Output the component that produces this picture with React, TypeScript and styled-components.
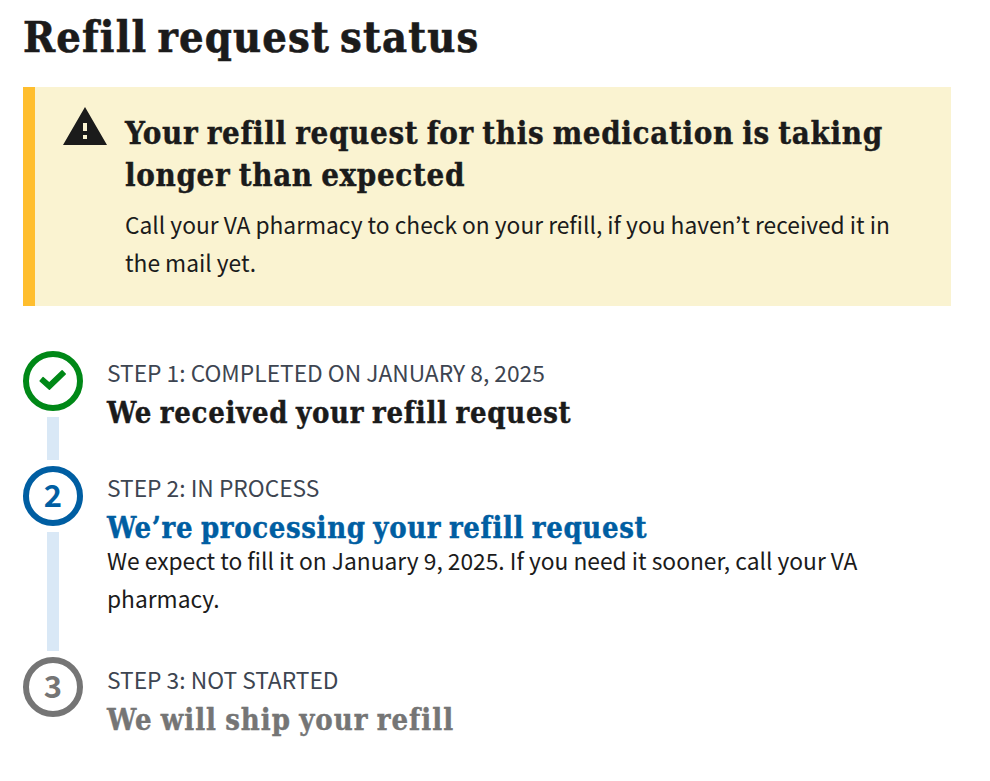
import React from "react";
import styled, { createGlobalStyle } from "styled-components";
import { MdWarning } from "react-icons/md";

const serif = `"DejaVu Serif Condensed", "DejaVu Serif", serif`;
const sans = `"Noto Sans CJK JP", "Open Sans", sans-serif`;

const GlobalStyle = createGlobalStyle`
  *, *::before, *::after { box-sizing: border-box; }
  body { margin: 0; background: #fff; color: #1b1b1b; font-family: ${sans}; }
  h1, h2, h3, p, ol { margin: 0; padding: 0; }
`;

const Page = styled.main`
  padding: 10px 39px 0 23px;
`;

const PageTitle = styled.h1`
  font: 700 43px/54px ${serif};
  letter-spacing: 1.15px;
  word-spacing: -4.5px;
  -webkit-text-stroke: 0.6px currentColor;
`;

const Alert = styled.section`
  display: flex;
  height: 219px;
  margin-top: 23px;
  padding: 16px 32px 0 26px;
  border-left: 12px solid #ffbe2e;
  background: #faf3d1;
`;

const AlertIcon = styled(MdWarning)`
  flex: none;
  width: 48px;
  height: 48px;
`;

const AlertBody = styled.div`
  flex: 1;
  padding: 9px 0 0 16px;
`;

const AlertTitle = styled.h2`
  font: 700 31px/42px ${serif};
  letter-spacing: 0.65px;
  word-spacing: -2px;
  -webkit-text-stroke: 0.4px currentColor;
`;

const Text = styled.p`
  font: 400 22.77px/38px ${sans};
`;

const AlertText = styled(Text)`
  margin-top: 10px;
`;

const Steps = styled.ol`
  margin-top: 45px;
  list-style: none;
`;

const StepItem = styled.li<{ $height: number }>`
  display: flex;
  height: ${(p) => p.$height}px;
`;

const Rail = styled.div`
  display: flex;
  flex: none;
  flex-direction: column;
  align-items: center;
  width: 60px;
  margin-right: 24px;
`;

const Marker = styled.div<{ $color: string }>`
  display: flex;
  flex: none;
  justify-content: center;
  width: 60px;
  height: 60px;
  border: 6px solid ${(p) => p.$color};
  border-radius: 50%;
  color: ${(p) => p.$color};
  font: 700 31px/44px ${sans};
`;

const Connector = styled.div`
  flex: 1;
  width: 12px;
  margin: 6px 0;
  background: #d9e8f6;
`;

const StepBody = styled.div<{ $top: number }>`
  flex: 1;
  padding-top: ${(p) => p.$top}px;
`;

const StepLabel = styled.p`
  color: #3d4551;
  font: 400 22.78px/38px ${sans};
  text-transform: uppercase;
`;

const StepTitle = styled.h3<{ $color: string; $spacing: number }>`
  padding-top: 8px;
  color: ${(p) => p.$color};
  font: 700 29px/27px ${serif};
  letter-spacing: ${(p) => p.$spacing}px;
  word-spacing: -2px;
  -webkit-text-stroke: 0.4px currentColor;
`;

const CheckIcon = () => (
  <svg width="48" height="48" viewBox="0 0 48 48" aria-hidden="true">
    <path
      d="M11.2 24 14 20.7l6.3 5.3 12.8-12.1 3.1 3.1-15.8 15.2z"
      fill="currentColor"
      stroke="currentColor"
      strokeWidth="1.6"
      strokeLinejoin="round"
    />
  </svg>
);

interface Step {
  marker: React.ReactNode;
  color: string;
  titleColor: string;
  label: string;
  title: string;
  spacing: number;
  top: number;
  height: number;
  text?: string;
}

const steps: Step[] = [
  {
    marker: <CheckIcon />,
    color: "#008817",
    titleColor: "#1b1b1b",
    label: "Step 1: Completed on January 8, 2025",
    title: "We received your refill request",
    spacing: 0.72,
    top: 3,
    height: 115,
  },
  {
    marker: "2",
    color: "#005ea2",
    titleColor: "#005ea2",
    label: "Step 2: In process",
    title: "We’re processing your refill request",
    spacing: 0.64,
    top: 3,
    height: 191,
    text: "We expect to fill it on January 9, 2025. If you need it sooner, call your VA pharmacy.",
  },
  {
    marker: "3",
    color: "#757575",
    titleColor: "#757575",
    label: "Step 3: Not started",
    title: "We will ship your refill",
    spacing: 1.03,
    top: 4,
    height: 100,
  },
];

export default function App() {
  return (
    <>
      <GlobalStyle />
      <Page>
        <PageTitle>Refill request status</PageTitle>
        <Alert>
          <AlertIcon />
          <AlertBody>
            <AlertTitle>
              Your refill request for this medication is taking longer than expected
            </AlertTitle>
            <AlertText>
              Call your VA pharmacy to check on your refill, if you haven’t received it in the mail yet.
            </AlertText>
          </AlertBody>
        </Alert>
        <Steps>
          {steps.map((s, i) => (
            <StepItem key={s.label} $height={s.height}>
              <Rail>
                <Marker $color={s.color}>{s.marker}</Marker>
                {i < steps.length - 1 && <Connector />}
              </Rail>
              <StepBody $top={s.top}>
                <StepLabel>{s.label}</StepLabel>
                <StepTitle $color={s.titleColor} $spacing={s.spacing}>{s.title}</StepTitle>
                {s.text && <Text>{s.text}</Text>}
              </StepBody>
            </StepItem>
          ))}
        </Steps>
      </Page>
    </>
  );
}
